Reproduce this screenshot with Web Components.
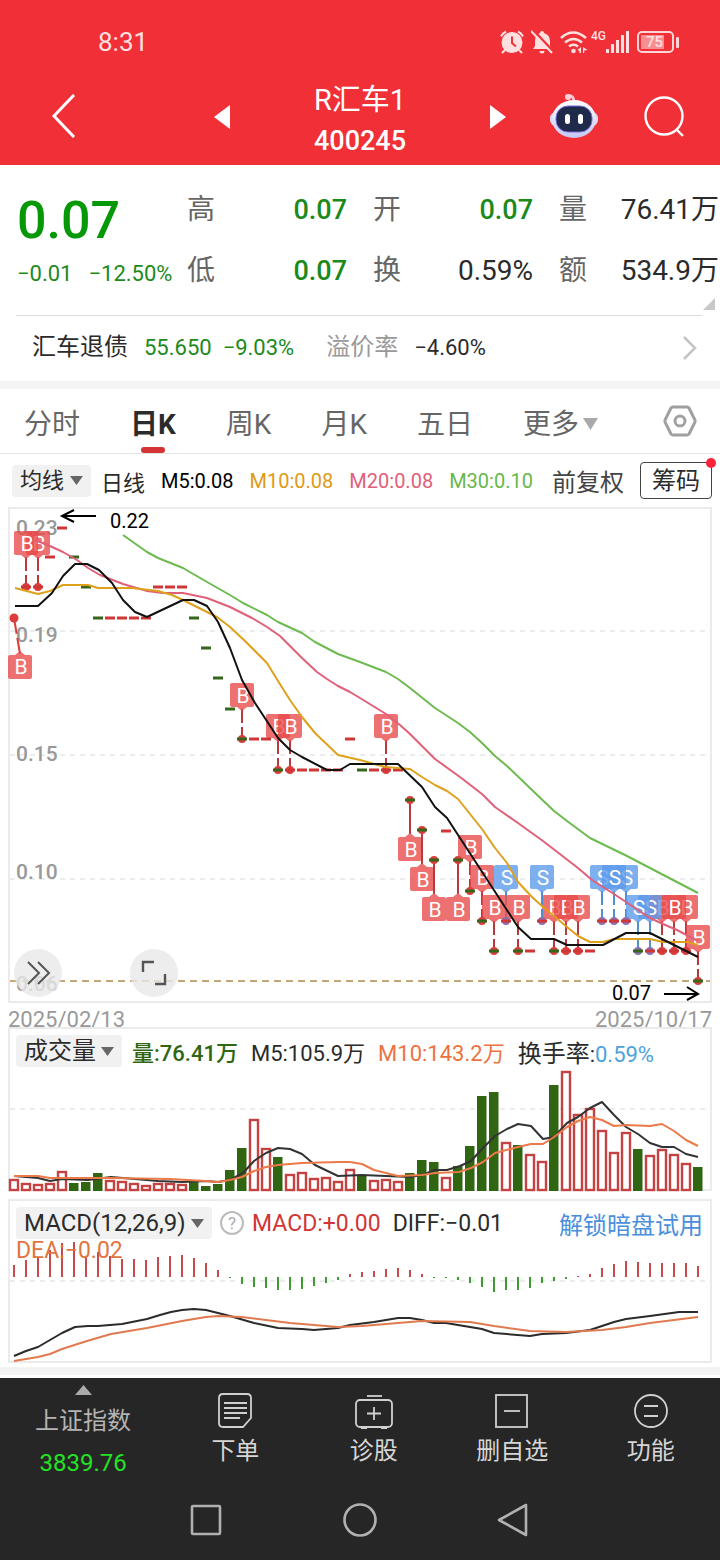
<!DOCTYPE html>
<html lang="zh-CN">
<head>
<meta charset="UTF-8">
<meta name="viewport" content="width=device-width, initial-scale=1">
<title>R汇车1 400245</title>
<style>
    body {
        margin: 0;
        background: #fff;
        color: #2b2b2b;
        font-family: Roboto, "Noto Sans CJK SC", sans-serif;
        font-size: 24px;
    }
</style>
</head>
<body>
<stock-page>
    <status-bar slot="header"></status-bar>
    <stock-header slot="header" name="R汇车1" code="400245"></stock-header>
    <quote-panel></quote-panel>
    <bond-strip></bond-strip>
    <period-tabs></period-tabs>
    <ma-legend></ma-legend>
    <price-chart></price-chart>
    <volume-chart></volume-chart>
    <macd-chart></macd-chart>
    <dock-bar slot="footer"></dock-bar>
    <system-nav slot="footer"></system-nav>
</stock-page>

<script>
const STEP = 12;
const FIRST = 14;
const xAt = (i) => FIRST + i * STEP;

class StockPage extends HTMLElement {
    constructor() {
        super();
        this.attachShadow({ mode: 'open' })
    }

    connectedCallback() {
        this.shadowRoot.innerHTML = /* html */`
            <style>
                :host { display: flex; flex-direction: column; min-height: 100vh; }
                header { background: #f12f37; color: #fff; }
                main { flex: 1; }
                .band { height: 8px; margin: 4px 0 3px; background: #f4f4f4; }
                footer { background: #262626; color: #d6d6d6; }
            </style>
            <header><slot name="header"></slot></header>
            <main><slot></slot><div class="band"></div></main>
            <footer><slot name="footer"></slot></footer>
        `;
    }
}

class StatusBar extends HTMLElement {
    constructor() {
        super();
        this.attachShadow({ mode: 'open' })
    }

    connectedCallback() {
        this.shadowRoot.innerHTML = /* html */`
            <style>
                :host {
                    display: flex;
                    align-items: center;
                    justify-content: space-between;
                    padding: 4px 41px 0 98px;
                    height: 76px;
                    color: #ffe0e1;
                    font-size: 26px;
                }
                .icons { display: flex; align-items: center; gap: 7px; }
                .signal { display: flex; align-items: flex-start; margin-left: -4px; }
                .signal small { font-size: 12px; line-height: 12px; font-weight: 500; }
                .battery {
                    display: flex;
                    align-items: center;
                }
                .battery span {
                    box-sizing: border-box;
                    width: 37px;
                    height: 22px;
                    border: 2px solid #ffd5d7;
                    border-radius: 5px;
                    padding: 1px 7px;
                    font-size: 15px;
                    line-height: 16px;
                    font-weight: 500;
                    background: linear-gradient(90deg, #f98e92 80%, transparent 80%) 2px 2px / 29px 14px no-repeat;
                }
                .battery i { width: 3px; height: 11px; margin-left: 2px; background: #ffd5d7; border-radius: 1px; }
                svg { display: block; }
            </style>
            <time>8:31</time>
            <div class="icons">
                <svg width="24" height="24" viewBox="0 0 24 24" fill="none" stroke="#ffe0e1" stroke-width="2">
                    <circle cx="12" cy="12.500" r="9.500" fill="#ffe0e1"/>
                    <path d="M1 6.500Q3 3 6 1.500M23 6.500Q21 3 18 1.500M5 20l-3 3M19 20l3 3"/>
                    <path d="M12 6.500V13l4 3.500" stroke="#f12f37"/>
                </svg>
                <svg width="22" height="24" viewBox="0 0 22 24">
                    <path fill="#ffe0e1" d="M11 1a2 2 0 0 1 2 2q6 2 6 8v5l2 3H2l2-3v-5q0-6 5-8a2 2 0 0 1 2-2zM8.500 21h5a2.500 2.500 0 0 1-5 0z"/>
                    <path d="M2 0l21 22" stroke="#f12f37" stroke-width="2.500"/>
                    <path d="M0 1l21 22" stroke="#ffe0e1" stroke-width="2"/>
                </svg>
                <svg width="28" height="24" viewBox="0 0 28 24" fill="none" stroke="#ffe0e1" stroke-width="2.600">
                    <path d="M1 8q12-11 25 0M5 12.500q8.500-7 17 0M9 16.500q4.500-3.500 9 0"/>
                    <circle cx="13.500" cy="21" r="2.300" fill="#ffe0e1" stroke="none"/>
                    <path fill="#ffe0e1" stroke="none" d="M21 17v6h-1.500v-2L17.500 20zM23 17v6h1.200v-2.500L27.500 20z"/>
                </svg>
                <div class="signal">
                    <small>4G</small>
                    <svg width="24" height="24" viewBox="0 0 24 24" fill="#ffe0e1">
                        <path d="M0 19h3v4H0zM5 14h3v9H5zM10 10h3v13h-3zM15 5h3v18h-3zM20 1h3v22h-3z"/>
                    </svg>
                </div>
                <div class="battery"><span>75</span><i></i></div>
            </div>
        `;
    }
}

class StockHeader extends HTMLElement {
    constructor() {
        super();
        this.attachShadow({ mode: 'open' })
    }

    connectedCallback() {
        this.render();
    }

    render() {
        this.shadowRoot.innerHTML = /* html */`
            <style>
                :host {
                    display: grid;
                    grid-template-columns: 1fr 292px 1fr;
                    padding-bottom: 3px;
                }
                .side, .center { display: flex; align-items: center; }
                .side { padding: 0 35px 10px 51px; }
                .right { padding-left: 0; justify-content: flex-end; gap: 46px; }
                .center { justify-content: space-between; }
                .center button { padding-bottom: 8px; }
                h1, p {
                    margin: 0;
                    text-align: center;
                    font-weight: 400;
                    font-size: 29px;
                    line-height: 41px;
                }
                p { font-size: 27px; font-weight: 500; }
                button { border: 0; padding: 0; background: none; cursor: pointer; }
                svg { display: block; }
            </style>
            <div class="side">
                <button aria-label="返回">
                    <svg width="25" height="44" viewBox="0 0 25 44" fill="none" stroke="#fff" stroke-width="3"><path d="M23 1L3 22l20 21"/></svg>
                </button>
            </div>
            <div class="center">
                <button aria-label="上一只">
                    <svg width="16" height="24" viewBox="0 0 16 24"><path d="M16 0v24L0 12z" fill="#fff"/></svg>
                </button>
                <div>
                    <h1>${this.getAttribute('name')}</h1>
                    <p>${this.getAttribute('code')}</p>
                </div>
                <button aria-label="下一只">
                    <svg width="16" height="24" viewBox="0 0 16 24"><path d="M0 0v24l16-12z" fill="#fff"/></svg>
                </button>
            </div>
            <div class="side right">
                <button aria-label="智能助手">
                    <svg width="48" height="46" viewBox="0 0 48 46">
                        <defs>
                            <linearGradient id="shell" x1="0" y1="0" x2="0" y2="1">
                                <stop offset="0" stop-color="#fff"/><stop offset="1" stop-color="#c3c8f4"/>
                            </linearGradient>
                        </defs>
                        <path d="M18 3q6-1 6 6" fill="none" stroke="#f9c3cb" stroke-width="3"/>
                        <circle cx="18" cy="4" r="3" fill="#ffd3d8"/>
                        <rect x="0" y="19" width="48" height="14" rx="6" fill="#dcd9f6"/>
                        <ellipse cx="24" cy="26" rx="22" ry="19" fill="url(#shell)"/>
                        <rect x="6" y="13" width="36" height="26" rx="12" fill="#1f2a4a" stroke="#7a6be0"/>
                        <rect x="15" y="21" width="5" height="10" rx="2.500" fill="#fff"/>
                        <rect x="28" y="21" width="5" height="10" rx="2.500" fill="#fff"/>
                    </svg>
                </button>
                <button aria-label="搜索">
                    <svg width="41" height="41" viewBox="0 0 41 41" fill="none" stroke="#fff" stroke-width="2.400">
                        <circle cx="20" cy="20" r="18.500"/><path d="M32 33l7 7"/>
                    </svg>
                </button>
            </div>
        `;
    }
}

class QuotePanel extends HTMLElement {
    constructor() {
        super();
        this.attachShadow({ mode: 'open' })
    }

    connectedCallback() {
        const stats = [
            ['高', '0.07', 'down'], ['开', '0.07', 'down'], ['量', '76.41万', ''],
            ['低', '0.07', 'down'], ['换', '0.59%', ''], ['额', '534.9万', '']
        ];

        this.shadowRoot.innerHTML = /* html */`
            <style>
                :host {
                    position: relative;
                    display: grid;
                    grid-template-columns: 153px 1fr;
                    column-gap: 17px;
                    padding: 25px 1px 19px 17px;
                }
                .price { font-size: 52px; line-height: 62px; font-weight: 500; color: #069806; }
                .change {
                    display: flex;
                    gap: 16px;
                    font-size: 22px;
                    line-height: 44px;
                    color: #1b8a1b;
                    white-space: nowrap;
                }
                dl {
                    display: grid;
                    grid-template-columns: repeat(3, 1fr);
                    align-content: start;
                    column-gap: 26px;
                    row-gap: 21px;
                    margin: 0;
                    font-size: 28px;
                    line-height: 40px;
                }
                dl div { display: flex; justify-content: space-between; white-space: nowrap; }
                dt { color: #666; }
                dd { margin: 0; }
                .down { color: #1b8a1b; font-size: 27px; font-weight: 500; }
                .more { position: absolute; right: 5px; bottom: 5px; }
            </style>
            <div>
                <div class="price">0.07</div>
                <div class="change"><span>−0.01</span><span>−12.50%</span></div>
            </div>
            <dl>
                ${stats.map(([k, v, c]) => `<div><dt>${k}</dt><dd class="${c}">${v}</dd></div>`).join('')}
            </dl>
            <svg class="more" width="12" height="12" viewBox="0 0 12 12"><path d="M12 0v12H0z" fill="#c8c8c8"/></svg>
        `;
    }
}

class BondStrip extends HTMLElement {
    constructor() {
        super();
        this.attachShadow({ mode: 'open' })
    }

    connectedCallback() {
        this.shadowRoot.innerHTML = /* html */`
            <style>
                :host { display: block; border-bottom: 8px solid #f4f4f4; }
                a {
                    display: flex;
                    align-items: center;
                    margin: 0 18px 0 16px;
                    padding: 0 5px 2px 16px;
                    border-top: 1px solid #dcdcdc;
                    line-height: 63px;
                    color: inherit;
                    text-decoration: none;
                    white-space: nowrap;
                }
                b { font-size: 22px; font-weight: 400; }
                .down { color: #1b8a1b; margin-left: 11px; }
                .name + .down { margin-left: 16px; }
                .key { color: #999; margin: 0 16px 0 32px; }
                svg { margin-left: auto; }
            </style>
            <a href="#bond">
                <span class="name">汇车退债</span>
                <b class="down">55.650</b>
                <b class="down">−9.03%</b>
                <span class="key">溢价率</span>
                <b>−4.60%</b>
                <svg width="14" height="24" viewBox="0 0 14 24" fill="none" stroke="#c4c4c4" stroke-width="2.500"><path d="M1 1l11 11L1 23"/></svg>
            </a>
        `;
    }
}

class PeriodTabs extends HTMLElement {
    constructor() {
        super();
        this.attachShadow({ mode: 'open' })
    }

    connectedCallback() {
        this.render('日K');
    }

    render(active) {
        const tabs = ['分时', '日K', '周K', '月K', '五日'];

        this.shadowRoot.innerHTML = /* html */`
            <style>
                :host { display: block; border-bottom: 1px solid #e4e4e4; }
                nav { display: flex; align-items: stretch; gap: 50px; padding: 0 23px 0 24px; }
                button {
                    position: relative;
                    height: 64px;
                    padding: 9px 0 1px;
                    border: 0;
                    background: none;
                    font: inherit;
                    font-size: 28px;
                    line-height: 54px;
                    color: #666;
                    cursor: pointer;
                    white-space: nowrap;
                }
                .on { color: #2b2b2b; font-weight: 700; }
                .on::after {
                    content: "";
                    position: absolute;
                    left: calc(50% - 12px);
                    bottom: 0;
                    width: 24px;
                    height: 6px;
                    border-radius: 3px;
                    background: #d53434;
                }
                .more { display: flex; align-items: center; gap: 4px; }
                .set { margin-left: auto; padding: 0; }
                svg { display: block; }
            </style>
            <nav>
                ${tabs.map((t) => `<button class="${t === active ? 'on' : ''}">${t}</button>`).join('')}
                <button class="more">更多 <svg width="15" height="14" viewBox="0 0 15 14"><path d="M0 0h15L7.500 12z" fill="#aaa"/></svg></button>
                <button class="set" aria-label="设置">
                    <svg width="34" height="34" viewBox="0 0 34 34" fill="none" stroke="#a0a0a0" stroke-width="3">
                        <path d="M10 3h14q1 0 2 1l6 12v2l-6 12q-1 1-2 1H10q-1 0-2-1L2 18v-2L8 4q1-1 2-1z"/>
                        <circle cx="17" cy="17" r="5"/>
                    </svg>
                </button>
            </nav>
        `;

        this.shadowRoot.querySelectorAll('nav button:not(.more):not(.set)').forEach((btn) => {
            btn.addEventListener('click', () => this.render(btn.textContent));
        });
    }
}

// Grey drop-down used in front of each indicator
class DropPill extends HTMLElement {
    constructor() {
        super();
        this.attachShadow({ mode: 'open' })
    }

    connectedCallback() {
        this.shadowRoot.innerHTML = /* html */`
            <style>
                :host { display: inline-flex; }
                label {
                    display: flex;
                    align-items: center;
                    gap: 5px;
                    padding: 0 8px;
                    background: #f1f1f1;
                    border-radius: 4px;
                    color: #2b2b2b;
                }
                select {
                    appearance: none;
                    height: 32px;
                    border: 0;
                    padding: 0;
                    margin: 0;
                    background: none;
                    color: inherit;
                    font: inherit;
                    line-height: 32px;
                }
            </style>
            <label>
                <select aria-label="${this.getAttribute('label')}"><option>${this.getAttribute('value')}</option></select>
                <svg width="13" height="9" viewBox="0 0 13 9"><path d="M0 0h13L6.500 9z" fill="#666"/></svg>
            </label>
        `;
    }
}

class MaLegend extends HTMLElement {
    constructor() {
        super();
        this.attachShadow({ mode: 'open' })
    }

    connectedCallback() {
        this.shadowRoot.innerHTML = /* html */`
            <style>
                :host {
                    display: flex;
                    align-items: center;
                    gap: 16px;
                    padding: 0 8px 0 12px;
                    height: 53px;
                    font-size: 20px;
                    white-space: nowrap;
                }
                .cjk { font-size: 22px; }
                drop-pill { font-size: 22px; margin-right: -6px; }
                .m5 { color: #000; }
                .m10 { color: #dd9b16; }
                .m20 { color: #e0607a; }
                .m30 { color: #66b84a; }
                .fq { margin-left: auto; font-size: 24px; color: #444; }
                button {
                    position: relative;
                    box-sizing: border-box;
                    height: 37px;
                    padding: 0 11px;
                    border: 1px solid #444;
                    border-radius: 4px;
                    background: #fff;
                    color: #2b2b2b;
                    font: inherit;
                    font-size: 24px;
                    line-height: 34px;
                }
                button::after {
                    content: "";
                    position: absolute;
                    right: -5px;
                    top: -5px;
                    width: 10px;
                    height: 10px;
                    border-radius: 50%;
                    background: #fa2338;
                }
            </style>
            <drop-pill label="主图指标" value="均线"></drop-pill>
            <span class="cjk">日线</span>
            <span class="m5">M5:0.08</span>
            <span class="m10">M10:0.08</span>
            <span class="m20">M20:0.08</span>
            <span class="m30">M30:0.10</span>
            <span class="fq">前复权</span>
            <button>筹码</button>
        `;
    }
}

// Framed plot; the header is stacked over the drawing
const panelStyle = /* css */`
    :host { display: block; margin: 0 8px; }
    .panel { position: relative; display: grid; border: 2px solid #ebebeb; }
    .panel > svg, .panel > .head { grid-area: 1 / 1; }
    .panel > svg { display: block; width: 100%; height: auto; overflow: visible; }
    .head { z-index: 1; padding: 6px 7px 0 6px; white-space: nowrap; }
    .row { display: flex; align-items: center; height: 32px; }
    .grid { stroke: #e6e6e6; stroke-width: 1.500; stroke-dasharray: 5 5; }
    .line { fill: none; stroke-width: 2; stroke-linejoin: round; }
`;

const line = (points, color) => `<polyline class="line" points="${points}" stroke="${color}"/>`;

class PriceChart extends HTMLElement {
    constructor() {
        super();
        this.attachShadow({ mode: 'open' })
    }

    // [index, y, colour, mark, label below the bar, drawn under its neighbours]
    get bars() {
        return [
            [1, 587, 'r', 'B'], [2, 587, 'r', 'B', 0, 1], [3, 557, 'r'], [4, 528, 'r'], [5, 557, 'g'], [6, 587, 'g'],
            [7, 618, 'g'], [8, 618, 'r'], [9, 618, 'r'], [10, 618, 'r'], [11, 618, 'r'],
            [12, 587, 'r'], [13, 587, 'r'], [14, 587, 'r'], [15, 618, 'g'], [16, 648, 'g'], [17, 678, 'g'], [18, 709, 'g'],
            [19, 739, 'g', 'B'], [20, 739, 'r'], [21, 739, 'r'], [22, 770, 'g', 'B', 0, 1], [23, 770, 'r', 'B'],
            [24, 770, 'r'], [25, 770, 'r'], [26, 770, 'r'], [27, 770, 'r'], [28, 739, 'r'], [29, 770, 'g'], [30, 770, 'r'],
            [31, 770, 'r', 'B'], [32, 770, 'r'], [33, 800, 'g', 'B', 1], [34, 830, 'g', 'B', 1], [35, 860, 'g', 'B', 1],
            [36, 831, 'r'], [37, 860, 'g', 'B', 1], [38, 891, 'g', 'B'], [39, 921, 'g', 'B'], [40, 951, 'g', 'B'],
            [41, 921, 'r', 'S'], [42, 951, 'g', 'B'], [43, 951, 'r'], [44, 921, 'r', 'S'], [45, 951, 'g', 'B', 0, 1],
            [46, 951, 'r', 'B', 0, 1], [47, 951, 'r', 'B'], [48, 951, 'r'], [49, 921, 'r', 'S', 0, 1], [51, 921, 'r', 'S', 0, 1],
            [50, 921, 'r', 'S'], [54, 951, 'r', 'B', 0, 1], [53, 951, 'r', 'S', 0, 1], [52, 951, 'g', 'S'],
            [56, 951, 'r', 'B', 0, 1], [55, 951, 'r', 'B'], [57, 981, 'g', 'B']
        ];
    }

    tick([i, y, c, mark]) {
        const fill = c === 'r' ? '#cf3636' : '#35661a';
        const dot = mark ? `<circle cx="${xAt(i)}" cy="${y}" r="4" fill="${mark === 'S' ? '#8a6fb0' : '#dd3c3c'}"/>` : '';
        return `${dot}<rect x="${xAt(i) - 5}" y="${y - 1.5}" width="10" height="3" fill="${fill}"/>`;
    }

    mark([i, y, , letter, below]) {
        const x = xAt(i);
        const cy = below ? y + 49 : y - 44;
        const color = letter === 'S' ? '#5b9aec' : '#e84a4a';
        const stem = letter === 'S' ? '#4f8fd0' : '#b83a3a';
        const path = below ? `M${x} ${y}v34` : `M${x} ${y - 30}v14M${x} ${y - 12}v12`;
        const tip = below ? `M${x - 5} ${cy - 12}l5-4 5 4z` : `M${x - 5} ${cy + 12}l5 4 5-4z`;
        return `<path d="${path}" stroke="${stem}" stroke-width="2"/>
            <g opacity=".78" fill="${color}"><rect x="${x - 12}" y="${cy - 12}" width="24" height="24" rx="2"/><path d="${tip}"/></g>
            <text class="mark" x="${x + 1}" y="${cy + 8}">${letter}</text>`;
    }

    connectedCallback() {
        const marked = this.bars.filter((b) => b[3]);
        const order = [...marked.filter((b) => b[5]), ...marked.filter((b) => !b[5])];
        const axis = [['0.23', 535], ['0.19', 642], ['0.15', 761], ['0.10', 879], ['0.06', 991]];

        this.shadowRoot.innerHTML = /* html */`
            <style>
                ${panelStyle}
                .axis { font-size: 21px; font-weight: 500; fill: #999; }
                .mark { font-size: 21px; fill: #fff; text-anchor: middle; }
                .note { font-size: 20px; fill: #000; }
                .arrow { fill: none; stroke: #000; stroke-width: 2; }
                button {
                    position: absolute;
                    bottom: 4px;
                    left: 4px;
                    width: 48px;
                    height: 48px;
                    padding: 0;
                    border: 0;
                    border-radius: 50%;
                    background: rgba(232, 232, 232, .8);
                }
                .full { left: 120px; }
                button svg { display: block; margin: auto; }
                .dates {
                    display: flex;
                    justify-content: space-between;
                    margin-bottom: -10px;
                    font-size: 22px;
                    line-height: 34px;
                    color: #999;
                }
            </style>
            <div class="panel">
                <svg viewBox="10 509 700 492">
                    <path class="grid" d="M10 631H710M10 755H710M10 879H710"/>
                    <path d="M10 981H710" stroke="#c3a67a" stroke-width="2" stroke-dasharray="7 5"/>
                    ${axis.map(([t, y]) => `<text class="axis" x="16" y="${y}">${t}</text>`).join('')}
                    <path d="M14 618l6 36" stroke="#dd3c3c" stroke-width="2" stroke-dasharray="16 4"/>
                    <circle cx="14" cy="618" r="4.500" fill="#dd3c3c"/>
                    <g opacity=".78" fill="#e84a4a"><rect x="8" y="655" width="24" height="24" rx="2"/><path d="M15 655l5-4 5 4z"/></g>
                    <text class="mark" x="21" y="674">B</text>
                    ${order.map(this.mark).join('')}
                    ${this.bars.map(this.tick).join('')}
                    ${line('123,535 147,552 158,558 183,568 207,582 230,595 243,603 267,615 278,622 302,633 315,642 338,654 360,662 386,672 398,679 410,688 425,700 435,708 458,723 470,732 482,743 495,756 507,766 532,790 554,811 567,821 590,838 627,856 650,868 698,893', '#6dba50')}
                    ${line('35,540 50,546 63,552 77,560 88,568 100,575 123,584 147,591 163,593 183,593 207,598 230,607 252,618 267,627 280,636 302,658 317,672 327,679 338,686 350,692 360,698 386,714 400,725 410,734 435,759 460,777 482,794 495,807 518,823 543,841 578,868 592,880 614,894 638,910 650,918 663,924 677,930 698,941', '#e0607a')}
                    ${line('15,588 38,594 50,591 63,585 88,585 98,588 132,588 158,591 172,595 183,600 217,617 230,627 245,641 267,663 278,681 290,700 302,717 315,733 338,755 360,760 385,767 410,769 422,777 435,785 447,791 458,799 482,829 495,848 507,863 518,882 532,897 543,907 554,916 567,927 578,936 590,942 603,942 614,939 650,939 663,942 687,942 698,945', '#dfa01c')}
                    ${line('15,606 38,606 52,593 63,576 75,564 87,564 99,570 112,583 123,600 135,612 147,617 183,600 194,600 207,606 218,622 230,648 242,680 255,703 278,738 290,750 302,757 327,770 340,770 350,764 398,764 422,787 435,807 447,818 518,927 531,939 554,939 567,945 603,945 626,933 650,933 698,957', '#111')}
                    <path class="arrow" d="M96 516H62M74 510l-12 6 12 6M664 994h34M687 987l11 7-11 6"/>
                    <text class="note" x="110" y="528">0.22</text>
                    <text class="note" x="612" y="1000">0.07</text>
                </svg>
                <button aria-label="展开">
                    <svg width="26" height="26" viewBox="0 0 26 26" fill="none" stroke="#555" stroke-width="2"><path d="M3 2l11 11L3 24M13 2l11 11-11 11"/></svg>
                </button>
                <button class="full" aria-label="全屏">
                    <svg width="26" height="26" viewBox="0 0 26 26" fill="none" stroke="#555" stroke-width="2.400"><path d="M2 12V2h11M14 24h10V14"/></svg>
                </button>
            </div>
            <div class="dates"><time>2025/02/13</time><time>2025/10/17</time></div>
        `;
    }
}

class VolumeChart extends HTMLElement {
    constructor() {
        super();
        this.attachShadow({ mode: 'open' })
    }

    connectedCallback() {
        const tops = [
            1179, 1183, 1184, 1183, 1171, 1183, 1182, 1173, 1180, 1181, 1183, 1185, 1183, 1183, 1184, 1182, 1186, 1184, 1170,
            1148, 1119, 1148, 1157, 1174, 1172, 1178, 1177, 1181, 1169, 1176, 1180, 1179, 1181, 1173, 1160, 1162, 1177, 1166,
            1146, 1096, 1092, 1142, 1145, 1154, 1161, 1085, 1071, 1114, 1108, 1130, 1152, 1132, 1149, 1155, 1149, 1154, 1163, 1167
        ];
        const green = [5, 6, 7, 15, 16, 17, 18, 19, 22, 29, 33, 34, 35, 37, 38, 39, 40, 42, 45, 52, 57];

        const bars = tops.map((y, i) => green.includes(i)
            ? `<rect x="${xAt(i) - 5}" y="${y}" width="9.500" height="${1191 - y}" fill="#306612"/>`
            : `<rect x="${xAt(i) - 4}" y="${y + 1}" width="8" height="${1189 - y}" fill="#fff" stroke="#c64141" stroke-width="2.400"/>`
        ).join('');

        this.shadowRoot.innerHTML = /* html */`
            <style>
                ${panelStyle}
                :host { margin-bottom: 8px; font-size: 22px; }
                .row { gap: 13px; }
                drop-pill { font-size: 24px; margin-right: -3px; }
                i { font-style: normal; font-size: 24px; }
                .vol { color: #306612; font-weight: 500; }
                .m10 { color: #ec7340; }
                .rate { color: #4ba3de; }
            </style>
            <div class="panel">
                <div class="head"><div class="row">
                    <drop-pill label="副图指标一" value="成交量"></drop-pill>
                    <span class="vol">量:76.41万</span>
                    <span>M5:105.9万</span>
                    <span class="m10">M10:143.2万</span>
                    <span><i>换手率</i>:<span class="rate">0.59%</span></span>
                </div></div>
                <svg viewBox="10 1029 700 160">
                    <path class="grid" d="M10 1109H710"/>
                    ${bars}
                    ${line('14,1176 38,1178 50,1181 62,1179 88,1180 111,1177 135,1179 158,1181 182,1182 206,1181 218,1182 230,1180 243,1173 254,1161 266,1153 278,1148 290,1149 302,1154 315,1165 338,1176 362,1175 386,1176 410,1177 422,1175 435,1170 447,1170 460,1166 471,1161 483,1148 495,1136 507,1129 518,1124 531,1126 543,1139 554,1137 567,1123 578,1117 590,1108 602,1102 614,1115 626,1127 638,1134 650,1143 662,1147 674,1147 686,1154 698,1157', '#333')}
                    ${line('14,1176 38,1176 50,1178 110,1178 170,1179 206,1181 218,1182 230,1180 242,1177 254,1171 266,1167 278,1165 302,1163 338,1162 350,1162 362,1164 374,1170 386,1173 398,1176 422,1175 435,1173 459,1172 471,1168 483,1162 495,1153 518,1147 531,1144 543,1144 554,1137 567,1127 578,1121 590,1117 602,1120 614,1126 626,1125 650,1126 662,1124 674,1131 686,1140 698,1146', '#ec7a48')}
                </svg>
            </div>
        `;
    }
}

class MacdChart extends HTMLElement {
    constructor() {
        super();
        this.attachShadow({ mode: 'open' })
    }

    connectedCallback() {
        const values = [
            12, 17, 20, 27, 34, 35, 21, 25, 21, 18, 18, 17, 20, 21, 22, 19, 14, 7, -1, -7, -10, -11, -13, -13, -12, -9, -6, -3,
            3, 5, 6, 8, 9, 7, 3, -1, -1, -3, -6, -10, -15, -13, -13, -11, -6, -4, -2, 1, 3, 9, 13, 16, 15, 14, 14, 14, 14, 11
        ];
        const bars = values.map((v, i) =>
            `<path d="M${xAt(i)} 1277v${-v}" stroke="${v > 0 ? '#c94a4a' : '#3f9a34'}" stroke-width="2"/>`
        ).join('');

        this.shadowRoot.innerHTML = /* html */`
            <style>
                ${panelStyle}
                :host { font-size: 23px; }
                .row { gap: 8px; }
                drop-pill { font-size: 24px; }
                .help {
                    box-sizing: border-box;
                    width: 24px;
                    height: 24px;
                    padding: 0;
                    border: 2px solid #bbb;
                    border-radius: 50%;
                    background: none;
                    color: #aaa;
                    font: inherit;
                    font-size: 17px;
                    line-height: 20px;
                }
                .macd { color: #d03636; margin-right: 4px; }
                .dea { color: #e2743f; line-height: 24px; }
                a { margin-left: auto; font-size: 24px; color: #4a8fdc; text-decoration: none; }
            </style>
            <div class="panel">
                <div class="head">
                    <div class="row">
                        <drop-pill label="副图指标二" value="MACD(12,26,9)"></drop-pill>
                        <button class="help">?</button>
                        <span class="macd">MACD:+0.00</span>
                        <span>DIFF:−0.01</span>
                        <a href="#trial">解锁暗盘试用</a>
                    </div>
                    <div class="dea">DEA:−0.02</div>
                </div>
                <svg viewBox="10 1201 700 160">
                    <path class="grid" d="M10 1281H710"/>
                    ${bars}
                    ${line('14,1356 26,1351 38,1347 50,1340 62,1333 75,1327 88,1326 98,1326 122,1324 147,1319 160,1315 171,1312 182,1310 194,1309 206,1310 230,1316 254,1323 278,1328 302,1329 314,1330 338,1328 350,1325 374,1322 398,1318 410,1318 422,1320 434,1323 446,1323 470,1327 482,1329 494,1333 530,1336 542,1334 566,1333 590,1330 602,1326 614,1322 626,1319 650,1316 679,1312 698,1312', '#2b2b2b')}
                    ${line('14,1361 38,1357 50,1354 62,1349 87,1341 111,1334 147,1328 182,1321 206,1317 218,1316 242,1317 266,1320 290,1323 314,1325 338,1327 362,1326 386,1324 410,1322 422,1321 470,1322 494,1326 530,1331 566,1332 602,1330 626,1327 650,1323 674,1320 698,1317', '#e07a50')}
                </svg>
            </div>
        `;
    }
}

class DockBar extends HTMLElement {
    constructor() {
        super();
        this.attachShadow({ mode: 'open' })
    }

    connectedCallback() {
        const items = [
            ['下单', '<path d="M7 2h24q4 0 4 4v20l-8 9H7q-4 0-4-4V6q0-4 4-4z"/><path d="M8 11h23M8 16h23M8 21h23M8 26h16"/>'],
            ['诊股', '<path d="M12 4h15"/><rect x="1" y="8" width="36" height="27" rx="4"/><path d="M19 15v13M12 21.500h14M6 36h6M26 36h6"/>'],
            ['删自选', '<rect x="3" y="3" width="31" height="32"/><path d="M11 19h16"/>'],
            ['功能', '<circle cx="19" cy="19" r="16"/><path d="M12 14h14M12 24h14"/>']
        ];

        this.shadowRoot.innerHTML = /* html */`
            <style>
                :host {
                    display: grid;
                    grid-template-columns: 6fr 5fr 5fr 5fr 5fr;
                    height: 112px;
                }
                button {
                    display: flex;
                    flex-direction: column;
                    align-items: center;
                    justify-content: flex-start;
                    padding: 14px 0 0;
                    border: 0;
                    background: none;
                    color: inherit;
                    font: inherit;
                    line-height: 42px;
                    cursor: pointer;
                }
                .index { padding-top: 7px; color: #b4b4b4; }
                .index span { margin-top: 5px; }
                .index b { font-weight: 400; color: #24e324; }
            </style>
            <button class="index">
                <svg width="17" height="10" viewBox="0 0 17 10"><path d="M8.500 0L17 10H0z" fill="#aaa"/></svg>
                <span>上证指数</span>
                <b>3839.76</b>
            </button>
            ${items.map(([label, icon]) => `
                <button>
                    <svg width="38" height="38" viewBox="0 0 38 38" fill="none" stroke="#d0d0d0" stroke-width="1.800">${icon}</svg>
                    <span>${label}</span>
                </button>`).join('')}
        `;
    }
}

class SystemNav extends HTMLElement {
    constructor() {
        super();
        this.attachShadow({ mode: 'open' })
    }

    connectedCallback() {
        this.shadowRoot.innerHTML = /* html */`
            <style>
                :host { display: flex; justify-content: center; gap: 118px; padding: 12px 0 22px; }
                button { border: 0; padding: 0; background: none; }
                svg { display: block; fill: none; stroke: #b0b0b0; stroke-width: 2.600; stroke-linejoin: round; }
            </style>
            <button aria-label="最近任务"><svg width="36" height="36" viewBox="0 0 36 36"><rect x="4" y="4" width="28" height="28" rx="1"/></svg></button>
            <button aria-label="主屏幕"><svg width="36" height="36" viewBox="0 0 36 36"><circle cx="18" cy="18" r="15.500"/></svg></button>
            <button aria-label="后退"><svg width="36" height="36" viewBox="0 0 36 36"><path d="M30 3v30L3 18z"/></svg></button>
        `;
    }
}

customElements.define('stock-page', StockPage)
customElements.define('status-bar', StatusBar)
customElements.define('stock-header', StockHeader)
customElements.define('quote-panel', QuotePanel)
customElements.define('bond-strip', BondStrip)
customElements.define('period-tabs', PeriodTabs)
customElements.define('drop-pill', DropPill)
customElements.define('ma-legend', MaLegend)
customElements.define('price-chart', PriceChart)
customElements.define('volume-chart', VolumeChart)
customElements.define('macd-chart', MacdChart)
customElements.define('dock-bar', DockBar)
customElements.define('system-nav', SystemNav)
</script>
</body>
</html>
